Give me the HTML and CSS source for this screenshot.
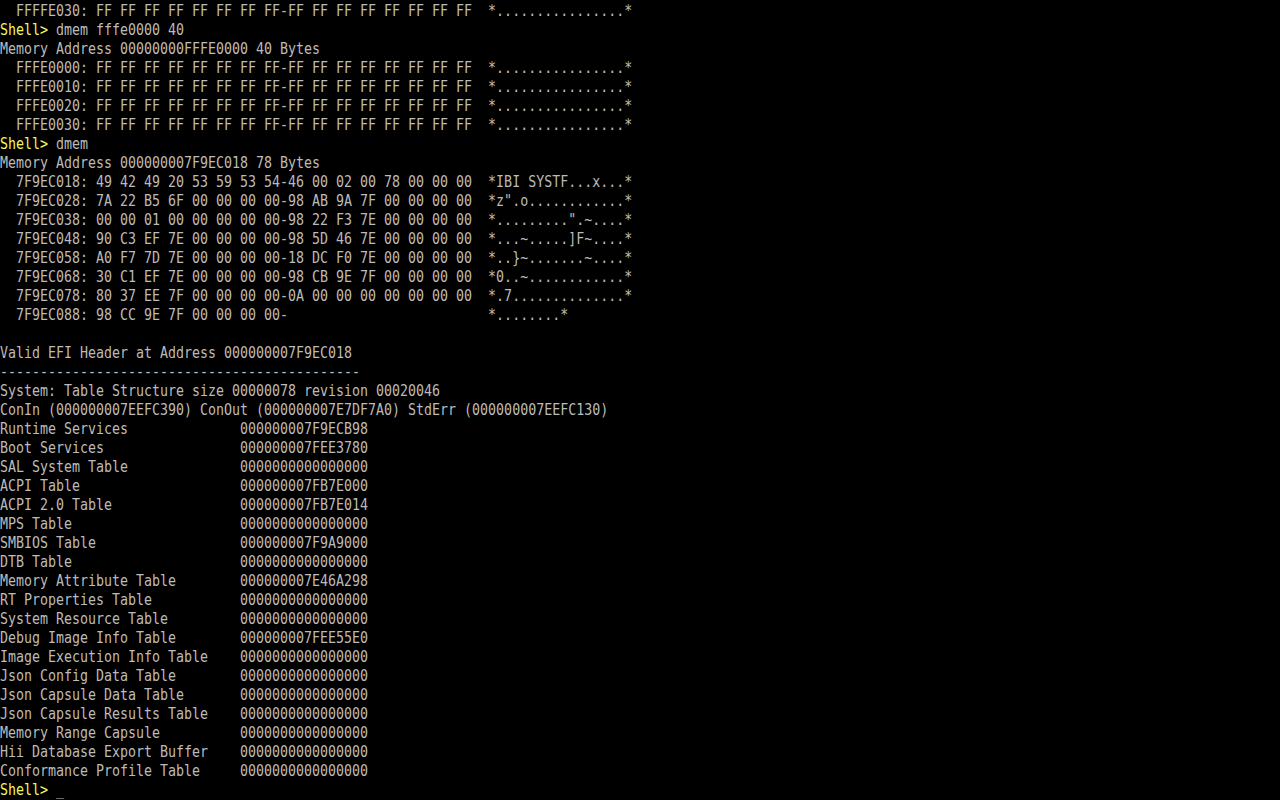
FILE: index.html
```html
<!DOCTYPE html>
<html>
<head>
<meta charset="utf-8">
<link rel="stylesheet" href="styles.css">
<title>UEFI Shell</title>
</head>
<body>
<div class="console">
<div class="ln">  FFFFE030: FF FF FF FF FF FF FF FF-FF FF FF FF FF FF FF FF  *................*</div>
<div class="ln"><span class="prompt">Shell&gt;</span><span class="cmd"> dmem fffe0000 40</span></div>
<div class="ln">Memory Address 00000000FFFE0000 40 Bytes</div>
<div class="ln">  FFFE0000: FF FF FF FF FF FF FF FF-FF FF FF FF FF FF FF FF  *................*</div>
<div class="ln">  FFFE0010: FF FF FF FF FF FF FF FF-FF FF FF FF FF FF FF FF  *................*</div>
<div class="ln">  FFFE0020: FF FF FF FF FF FF FF FF-FF FF FF FF FF FF FF FF  *................*</div>
<div class="ln">  FFFE0030: FF FF FF FF FF FF FF FF-FF FF FF FF FF FF FF FF  *................*</div>
<div class="ln"><span class="prompt">Shell&gt;</span><span class="cmd"> dmem</span></div>
<div class="ln">Memory Address 000000007F9EC018 78 Bytes</div>
<div class="ln">  7F9EC018: 49 42 49 20 53 59 53 54-46 00 02 00 78 00 00 00  *IBI SYSTF...x...*</div>
<div class="ln">  7F9EC028: 7A 22 B5 6F 00 00 00 00-98 AB 9A 7F 00 00 00 00  *z".o............*</div>
<div class="ln">  7F9EC038: 00 00 01 00 00 00 00 00-98 22 F3 7E 00 00 00 00  *.........".~....*</div>
<div class="ln">  7F9EC048: 90 C3 EF 7E 00 00 00 00-98 5D 46 7E 00 00 00 00  *...~.....]F~....*</div>
<div class="ln">  7F9EC058: A0 F7 7D 7E 00 00 00 00-18 DC F0 7E 00 00 00 00  *..}~.......~....*</div>
<div class="ln">  7F9EC068: 30 C1 EF 7E 00 00 00 00-98 CB 9E 7F 00 00 00 00  *0..~............*</div>
<div class="ln">  7F9EC078: 80 37 EE 7F 00 00 00 00-0A 00 00 00 00 00 00 00  *.7..............*</div>
<div class="ln">  7F9EC088: 98 CC 9E 7F 00 00 00 00-                         *........*</div>
<div class="ln"> </div>
<div class="ln">Valid EFI Header at Address 000000007F9EC018</div>
<div class="ln">---------------------------------------------</div>
<div class="ln">System: Table Structure size 00000078 revision 00020046</div>
<div class="ln">ConIn (000000007EEFC390) ConOut (000000007E7DF7A0) StdErr (000000007EEFC130)</div>
<div class="ln">Runtime Services              000000007F9ECB98</div>
<div class="ln">Boot Services                 000000007FEE3780</div>
<div class="ln">SAL System Table              0000000000000000</div>
<div class="ln">ACPI Table                    000000007FB7E000</div>
<div class="ln">ACPI 2.0 Table                000000007FB7E014</div>
<div class="ln">MPS Table                     0000000000000000</div>
<div class="ln">SMBIOS Table                  000000007F9A9000</div>
<div class="ln">DTB Table                     0000000000000000</div>
<div class="ln">Memory Attribute Table        000000007E46A298</div>
<div class="ln">RT Properties Table           0000000000000000</div>
<div class="ln">System Resource Table         0000000000000000</div>
<div class="ln">Debug Image Info Table        000000007FEE55E0</div>
<div class="ln">Image Execution Info Table    0000000000000000</div>
<div class="ln">Json Config Data Table        0000000000000000</div>
<div class="ln">Json Capsule Data Table       0000000000000000</div>
<div class="ln">Json Capsule Results Table    0000000000000000</div>
<div class="ln">Memory Range Capsule          0000000000000000</div>
<div class="ln">Hii Database Export Buffer    0000000000000000</div>
<div class="ln">Conformance Profile Table     0000000000000000</div>
<div class="ln"><span class="prompt">Shell&gt;</span><span class="cmd"> </span><span class="cursor">_</span></div>
</div>
</body>
</html>
```
FILE: styles.css
```css
html, body {
  margin: 0;
  padding: 0;
  background: #000000;
  width: 1280px;
  height: 800px;
  overflow: hidden;
}

.console {
  padding: 1px 0 0 0;
  font-family: "DejaVu Sans Mono", "Liberation Mono", monospace;
  font-size: 16px;
  line-height: 19px;
  color: #bbbbbb;
  transform: scaleX(0.8307);
  transform-origin: 0 0;
  width: 1000px;
}

.ln {
  white-space: pre;
  height: 19px;
}

.prompt {
  color: #f5f560;
}

.cursor {
  color: #bbbbbb;
}
```
